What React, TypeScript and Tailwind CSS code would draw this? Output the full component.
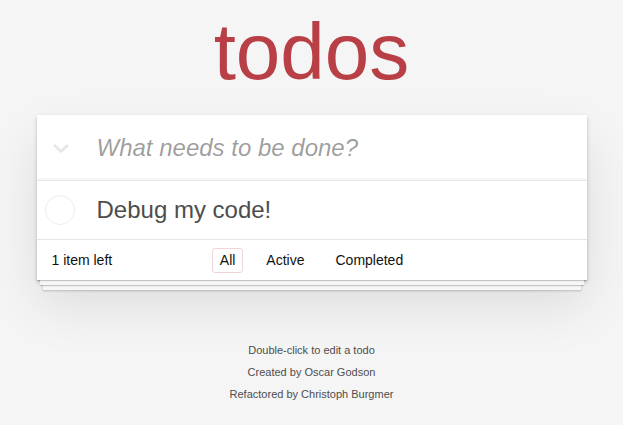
const filters = ["All", "Active", "Completed"];

function TodoItem({ title }: { title: string }) {
  return (
    <li className="flex h-[58px] items-center">
      <div className="flex w-[60px] shrink-0 items-center pl-[8px]">
        <div className="h-[30px] w-[30px] rounded-full border border-[#ededed]" />
      </div>
      <label className="text-[24px] leading-[1.2] text-[#4d4d4d]">{title}</label>
    </li>
  );
}

export default function App() {
  const selected = "All";

  return (
    <div className="min-h-screen bg-[#f5f5f5] font-['Liberation_Sans',Arial,sans-serif] text-[14px] text-[#111]">
      <div className="mx-auto w-[550px] pt-[12px]">
        <h1 className="text-center text-[80px] leading-[80px] text-[#b83f45]">todos</h1>

        <section className="relative mt-[23px] bg-white shadow-[0_2px_4px_0_rgba(0,0,0,0.2),0_25px_50px_0_rgba(0,0,0,0.1)]">
          <header className="flex h-[65px] items-center shadow-[inset_0_-2px_1px_rgba(0,0,0,0.03)]">
            <div className="mt-[2px] flex w-[60px] shrink-0 pl-[15px]">
              <svg width="18" height="11" viewBox="0 0 18 11" fill="none">
                <path d="M2 2 L9 8.5 L16 2" stroke="#e6e6e6" strokeWidth="2.6" strokeLinejoin="round" />
              </svg>
            </div>
            <input
              className="flex-1 bg-transparent p-0 text-[24px] text-[#4d4d4d] outline-none placeholder:italic placeholder:text-[rgba(0,0,0,0.4)]"
              placeholder="What needs to be done?"
            />
          </header>

          <ul className="border-t border-[#e6e6e6]">
            <TodoItem title="Debug my code!" />
          </ul>

          <footer className="relative flex h-[41px] items-center border-t border-[#e6e6e6] px-[15px] shadow-[0_1px_1px_rgba(0,0,0,0.2),0_8px_0_-3px_#f6f6f6,0_9px_1px_-3px_rgba(0,0,0,0.2),0_16px_0_-6px_#f6f6f6,0_17px_2px_-6px_rgba(0,0,0,0.2)]">
            <span className="w-[120px] leading-[20px]">1 item left</span>
            <ul className="absolute inset-x-0 flex justify-center gap-[15px]">
              {filters.map((f) => (
                <li key={f}>
                  <a
                    className={`block rounded-[3px] border px-[7px] py-[3px] leading-[17px] ${
                      f === selected ? "border-[rgba(175,47,47,0.2)]" : "border-transparent"
                    }`}
                  >
                    {f}
                  </a>
                </li>
              ))}
            </ul>
          </footer>
        </section>

        <div className="mt-[65px] flex flex-col items-center gap-[11px] text-[11px] leading-[11px] text-[#4d4d4d]">
          <p>Double-click to edit a todo</p>
          <p>Created by Oscar Godson</p>
          <p>Refactored by Christoph Burgmer</p>
        </div>
      </div>
    </div>
  );
}
